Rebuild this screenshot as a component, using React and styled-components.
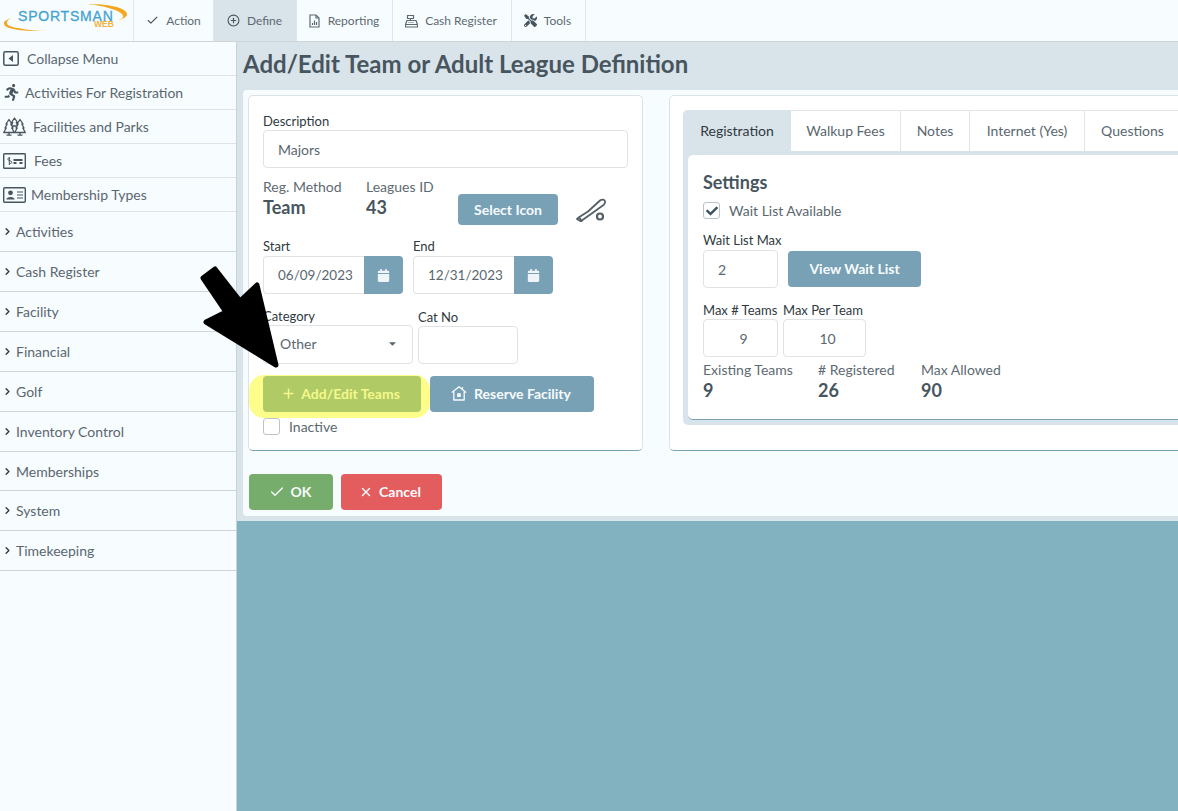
import React from "react";
import styled, { createGlobalStyle } from "styled-components";
import { Check, CirclePlus, ChevronRight, Plus, X } from "lucide-react";
import { FaRunning, FaCalendar, FaCheck, FaCaretDown, FaTools } from "react-icons/fa";

const Global = createGlobalStyle`
  html, body { margin: 0; padding: 0; height: 100%; overflow: hidden; }
  body { font-family: Lato, "Open Sans", sans-serif; color: #4b5962; background: #f7fcff; }
  * { box-sizing: border-box; }
`;

const Page = styled.div`
  position: relative;
  width: 1178px;
  height: 811px;
  overflow: hidden;
  display: flex;
  flex-direction: column;
`;

const TopBar = styled.header`
  height: 42px;
  flex: none;
  display: flex;
  background: #f7fcff;
  border-bottom: 1px solid #cfd6da;
`;

const LogoBox = styled.div`
  position: relative;
  width: 134px;
  flex: none;
  border-right: 1px solid #e0e6e9;
`;

const LogoName = styled.span`
  position: absolute;
  left: 18px;
  top: 11px;
  font: 400 14px/11px "Liberation Sans", sans-serif;
  letter-spacing: 0.8px;
  -webkit-text-stroke: 0.3px #45a3cf;
  color: #45a3cf;
`;

const LogoSub = styled.span`
  position: absolute;
  left: 94px;
  top: 21px;
  font: 700 8.5px/6px "Liberation Sans", sans-serif;
  color: #f2b23a;
`;

const LogoSwoosh = styled.svg`
  position: absolute;
  left: 0;
  top: 0;
`;

const NavTab = styled.div`
  width: ${(p) => p.$w}px;
  display: flex;
  align-items: center;
  justify-content: center;
  gap: 7px;
  padding-right: ${(p) => p.$shift || 0}px;
  font-size: 12px;
  color: #5d6a72;
  background: ${(p) => (p.$active ? "#d9e3ea" : "transparent")};
  border-right: 1px solid #e0e6e9;
`;

const Body = styled.div`
  flex: 1;
  display: flex;
  min-height: 0;
`;

const Sidebar = styled.nav`
  width: 237px;
  flex: none;
  background: #f7fcff;
  border-right: 1px solid #c9d2d7;
`;

const MenuLink = styled.div`
  height: 34px;
  display: flex;
  align-items: center;
  padding-left: 3px;
  font-size: 14px;
  color: #5a676f;
  border-bottom: 1px solid #dde3e6;
  svg { flex: none; }
  span { margin-left: ${(p) => p.$gap}px; }
`;

const MenuGroup = styled.div`
  height: ${(p) => p.$h || 40}px;
  display: flex;
  align-items: center;
  padding-left: 2px;
  font-size: 14px;
  color: #5a676f;
  border-bottom: 1px solid #cfd6da;
  span { margin-left: 3px; }
`;

const Main = styled.main`
  flex: 1;
  min-width: 0;
  background: #82b1bf;
`;

const Content = styled.div`
  background: #d9e3ea;
  padding: 0 0 5px 6px;
`;

const Heading = styled.div`
  height: 48px;
  padding-bottom: 5px;
  display: flex;
  align-items: center;
  font-size: 24px;
  font-weight: 700;
  color: #47555e;
`;

const Panel = styled.div`
  width: 1000px;
  height: 426px;
  padding: 5px 0 0 5px;
  background: #f7fcff;
  border-radius: 4px 0 0 4px;
`;

const Cards = styled.div`
  display: flex;
  gap: 26px;
  align-items: flex-start;
`;

const Card = styled.section`
  width: ${(p) => p.$w}px;
  height: 356px;
  flex: none;
  background: #fff;
  border: 1px solid #dde2e5;
  border-bottom: 1px solid #78a1b6;
  border-radius: 5px;
  padding: ${(p) => p.$pad};
`;

const Label = styled.label`
  display: block;
  height: 18px;
  font-size: 13px;
  line-height: 18px;
  color: #2f3a41;
  white-space: nowrap;
`;

const TextBox = styled.div`
  width: ${(p) => p.$w}px;
  height: ${(p) => p.$h || 38}px;
  display: flex;
  align-items: center;
  justify-content: ${(p) => (p.$center ? "center" : "flex-start")};
  padding-left: ${(p) => (p.$center ? 6 : 14)}px;
  background: #fff;
  border: 1px solid #dfe3e6;
  border-radius: 4px;
  font-size: 14px;
  color: #5a676f;
`;

const Row = styled.div`
  display: flex;
  align-items: ${(p) => p.$align || "flex-start"};
  gap: ${(p) => p.$gap || 0}px;
  margin-top: ${(p) => p.$mt || 0}px;
`;

const InfoRow = styled(Row)`
  height: 50px;
`;

const Field = styled.div`
  margin-top: ${(p) => p.$mt || 0}px;
`;

const Stat = styled.div`
  width: ${(p) => p.$w}px;
  flex: none;
`;

const StatLabel = styled.div`
  font-size: 14px;
  line-height: 18px;
  color: #5d6a72;
  white-space: nowrap;
`;

const StatValue = styled.div`
  font-size: 18px;
  line-height: 22px;
  font-weight: 700;
  color: #47555e;
`;

const Button = styled.div`
  width: ${(p) => p.$w}px;
  height: ${(p) => p.$h || 36}px;
  flex: none;
  display: flex;
  align-items: center;
  justify-content: center;
  gap: ${(p) => p.$gap ?? 6}px;
  padding: 0 ${(p) => p.$shift || 0}px 1px 0;
  background: ${(p) => p.$bg || "#78a1b6"};
  color: #f7fbfd;
  border-radius: 4px;
  font-size: 14px;
  font-weight: 700;
`;

const HighlightButton = styled(Button)`
  position: relative;
  color: #f5f98c;
  background: #b0ca66;
  &::before {
    content: "";
    position: absolute;
    inset: -1px -9px -6px -14px;
    background: #fdfd8c;
    border-radius: 15px;
    z-index: -1;
  }
`;

const Isolated = styled(Row)`
  isolation: isolate;
`;

const DateGroup = styled.div`
  display: flex;
  margin-top: 1px;
`;

const DateInput = styled(TextBox)`
  border-right: 0;
  border-radius: 4px 0 0 4px;
  font-size: 13.5px;
  padding-bottom: 1px;
`;

const DateButton = styled.div`
  width: 39px;
  height: 38px;
  display: flex;
  align-items: center;
  justify-content: center;
  background: #78a1b6;
  color: #eef4f7;
  border-radius: 0 4px 4px 0;
  font-size: 13px;
`;

const SelectBox = styled(TextBox)`
  justify-content: space-between;
  padding: 0 14px 2px 16px;
  color: #5a676f;
`;

const CheckBox = styled.div`
  width: 17px;
  height: 17px;
  flex: none;
  display: flex;
  align-items: center;
  justify-content: center;
  border: 1px solid #bcc4c9;
  border-radius: 3px;
  background: #fff;
  color: #3b5566;
  font-size: 12px;
`;

const CheckText = styled.span`
  font-size: 14px;
  color: #5a676f;
  margin-left: 9px;
`;

const TabBox = styled.div`
  width: 600px;
  height: 315px;
  background: #d9e3ea;
  border-radius: 5px;
`;

const TabStrip = styled.div`
  height: 41px;
  display: flex;
`;

const Tab = styled.div`
  width: ${(p) => p.$w}px;
  flex: none;
  display: flex;
  align-items: center;
  justify-content: center;
  padding-bottom: ${(p) => (p.$active ? 0 : 1)}px;
  font-size: 14px;
  color: ${(p) => (p.$active ? "#2f3a41" : "#5a676f")};
  background: ${(p) => (p.$active ? "#d9e3ea" : "#fff")};
  border-top: ${(p) => (p.$active ? "0" : "1px solid #e0e5e8")};
  border-right: ${(p) => (p.$active ? "0" : "1px solid #e0e5e8")};
  border-radius: ${(p) => (p.$active ? "5px 0 0 0" : "0")};
`;

const TabContent = styled.div`
  margin: 4px 0 0 5px;
  height: 265px;
  padding: 15px 15px 0;
  background: #fff;
  border-radius: 5px 0 0 5px;
  border-bottom: 1px solid #78a1b6;
`;

const SectionTitle = styled.h3`
  margin: 0;
  font-size: 18px;
  line-height: 24px;
  font-weight: 700;
  color: #47555e;
`;

const FormActions = styled.div`
  display: flex;
  gap: 8px;
  margin: 23px 0 0 1px;
`;

const Arrow = styled.svg`
  position: absolute;
  left: 190px;
  top: 260px;
  pointer-events: none;
`;

const menuLinks = [
  {
    label: "Collapse Menu",
    gap: 7,
    icon: (
      <svg width="17" height="17" viewBox="0 0 17 17">
        <rect x="0.8" y="1.8" width="14.4" height="13.4" rx="1.5" fill="none" stroke="#47555e" strokeWidth="1.5" />
        <path d="M10 5v7L5.500 8.500z" fill="#47555e" />
      </svg>
    ),
  },
  { label: "Activities For Registration", gap: 5, icon: <FaRunning size={17} color="#47555e" /> },
  {
    label: "Facilities and Parks",
    gap: 7,
    icon: (
      <svg width="23" height="19" viewBox="0 0 23 19" fill="none" stroke="#47555e" strokeWidth="1.300" strokeLinejoin="round">
        <path d="M11.500 1 8.500 5.500h1.200L8 9h7l-1.700-3.500h1.200z" />
        <path d="M6 2.500 3 7h1.200L2 11h1.200L.7 15.500h10.600L8.800 11H10L7.800 7H9z" fill="#f7fcff" />
        <path d="M17 2.500 14 7h1.200L13 11h1.200l-2.500 4.500h10.600L19.800 11H21l-2.200-4H20z" fill="#f7fcff" />
        <path d="M6 15.500v2.500M17 15.500v2.500M3.500 18.200h5M14.500 18.200h5" />
      </svg>
    ),
  },
  {
    label: "Fees",
    gap: 8,
    icon: (
      <svg width="23" height="16" viewBox="0 0 23 16" fill="none">
        <rect x="0.7" y="0.7" width="21.6" height="14.6" rx="0.8" stroke="#47555e" strokeWidth="1.4" />
        <path d="M7 5.200c-2.500-.8-3.200 2 0 2.600 2.800.6 2 3.200-.4 2.600M6.300 4v8" stroke="#47555e" strokeWidth="1" />
        <path d="M10.500 6h9v2h-9zM10.500 9h3v2h-3zM16.500 9h3v2h-3z" fill="#47555e" />
      </svg>
    ),
  },
  {
    label: "Membership Types",
    gap: 5,
    icon: (
      <svg width="23" height="16" viewBox="0 0 23 16" fill="none">
        <rect x="0.7" y="0.7" width="21.6" height="14.6" rx="1" stroke="#47555e" strokeWidth="1.4" />
        <circle cx="7.500" cy="5.800" r="2.400" fill="#47555e" />
        <path d="M3.300 12.500c0-3.400 8.400-3.400 8.400 0z" fill="#47555e" />
        <path d="M14 5h6M14 8h6M14 11h6" stroke="#47555e" strokeWidth="1.100" />
      </svg>
    ),
  },
];

const menuGroups = [
  { label: "Activities" },
  { label: "Cash Register" },
  { label: "Facility" },
  { label: "Financial" },
  { label: "Golf" },
  { label: "Inventory Control" },
  { label: "Memberships", h: 39 },
  { label: "System" },
  { label: "Timekeeping" },
];

const navIconProps = { width: 13, height: 14, fill: "none", stroke: "#5d6a72", strokeWidth: 1.2 };

const ReportIcon = () => (
  <svg {...navIconProps} viewBox="0 0 13 14">
    <path d="M2 1h6l3 3v9H2z" />
    <path d="M8 1v3h3M4.500 11V9M6.500 11V6.500M8.500 11V8" />
  </svg>
);

const RegisterIcon = () => (
  <svg {...navIconProps} viewBox="0 0 13 14">
    <path d="M2.500 1.500h6v3h-6zM5.500 4.500v2M2 6.500h9l1.500 4H.5zM.5 10.500h12V13H.5z" />
    <path d="M3.500 8.500h6" strokeDasharray="1 1" />
  </svg>
);

const BatIcon = () => (
  <svg width="30" height="24" viewBox="0 0 30 24" fill="none" stroke="#555f66" strokeWidth="1.800" strokeLinejoin="round">
    <path d="M1 21 3 19.300 12 13.500 24 2.500C26 1 28.500 1.300 29 3.300 29.400 5 28.500 6 27.500 7L15 16 6.500 22 5 23.500z" />
    <path d="M3 19.300 5.500 22.500" />
    <circle cx="24" cy="18.500" r="3" strokeWidth="2.200" />
  </svg>
);

const HomeIcon = () => (
  <svg width="16" height="15" viewBox="0 0 16 15" fill="none" stroke="#f7fbfd" strokeWidth="1.300" strokeLinejoin="round">
    <path d="M.8 6.500 8 .8l7.200 5.700M2.800 5.500V14h10.400V5.500M11.500 1v2.500" />
    <path d="M6.800 8h2.400v2.400H6.800z" fill="#f7fbfd" />
  </svg>
);

const navItems = [
  { label: "Action", w: 80, icon: <Check size={13} color="#47555e" /> },
  { label: "Define", w: 83, active: true, shift: 1, icon: <CirclePlus size={13} color="#47555e" /> },
  { label: "Reporting", w: 96, shift: 2, icon: <ReportIcon /> },
  { label: "Cash Register", w: 119, shift: 2, icon: <RegisterIcon /> },
  { label: "Tools", w: 74, shift: 2, icon: <FaTools size={13} color="#47555e" /> },
];

const tabs = [
  { label: "Registration", w: 108, active: true },
  { label: "Walkup Fees", w: 110 },
  { label: "Notes", w: 69 },
  { label: "Internet (Yes)", w: 115 },
  { label: "Questions", w: 96 },
];

export default function App() {
  return (
    <Page>
      <Global />
      <TopBar>
        <LogoBox>
          <LogoName>SPORTSMAN</LogoName>
          <LogoSub>WEB</LogoSub>
          <LogoSwoosh width="134" height="41" viewBox="0 0 134 41">
            <path d="M12 17C4 22 5 26 18 28 26 30 36 31 45 31 28 31.500-2 30 5 21z" fill="#f2a71e" />
            <path d="M88 4c18 0 40 3 39 11-.4 2-5 4.500-9 5.500 3-1 6-3 5-5-2-5-18-9.500-35-11.500z" fill="#f2a71e" />
          </LogoSwoosh>
        </LogoBox>
        {navItems.map((item) => (
          <NavTab key={item.label} $w={item.w} $active={item.active} $shift={item.shift}>
            {item.icon}
            {item.label}
          </NavTab>
        ))}
      </TopBar>
      <Body>
        <Sidebar>
          {menuLinks.map((link) => (
            <MenuLink key={link.label} $gap={link.gap}>
              {link.icon}
              <span>{link.label}</span>
            </MenuLink>
          ))}
          {menuGroups.map((group) => (
            <MenuGroup key={group.label} $h={group.h}>
              <ChevronRight size={11} color="#2f3a41" strokeWidth={3} />
              <span>{group.label}</span>
            </MenuGroup>
          ))}
        </Sidebar>
        <Main>
          <Content>
            <Heading>Add/Edit Team or Adult League Definition</Heading>
            <Panel>
              <Cards>
                <Card $w={395} $pad="16px 14px 0">
                  <Label>Description</Label>
                  <TextBox $w={365}>Majors</TextBox>
                  <InfoRow $mt={10}>
                    <Stat $w={103}>
                      <StatLabel>Reg. Method</StatLabel>
                      <StatValue>Team</StatValue>
                    </Stat>
                    <Stat $w={92}>
                      <StatLabel>Leagues ID</StatLabel>
                      <StatValue>43</StatValue>
                    </Stat>
                    <Row $mt={16} $gap={18} $align="center">
                      <Button $w={100} $h={31}>Select Icon</Button>
                      <BatIcon />
                    </Row>
                  </InfoRow>
                  <Row $mt={9} $gap={10}>
                    <div>
                      <Label>Start</Label>
                      <DateGroup>
                        <DateInput $w={101}>06/09/2023</DateInput>
                        <DateButton><FaCalendar /></DateButton>
                      </DateGroup>
                    </div>
                    <div>
                      <Label>End</Label>
                      <DateGroup>
                        <DateInput $w={101}>12/31/2023</DateInput>
                        <DateButton><FaCalendar /></DateButton>
                      </DateGroup>
                    </div>
                  </Row>
                  <Row $mt={13} $gap={5}>
                    <div>
                      <Label>Category</Label>
                      <SelectBox $w={150} $h={39}>
                        Other
                        <FaCaretDown size={11} color="#5a676f" />
                      </SelectBox>
                    </div>
                    <Field $mt={1}>
                      <Label>Cat No</Label>
                      <TextBox $w={100} />
                    </Field>
                  </Row>
                  <Isolated $mt={12} $gap={9}>
                    <HighlightButton $w={158} $gap={5} $shift={3}>
                      <Plus size={15} strokeWidth={2.4} />
                      Add/Edit Teams
                    </HighlightButton>
                    <Button $w={164} $gap={7} $shift={2}>
                      <HomeIcon />
                      Reserve Facility
                    </Button>
                  </Isolated>
                  <Row $mt={6} $align="center">
                    <CheckBox />
                    <CheckText>Inactive</CheckText>
                  </Row>
                </Card>
                <Card $w={520} $pad="14px 0 0 13px">
                  <TabBox>
                    <TabStrip>
                      {tabs.map((tab) => (
                        <Tab key={tab.label} $w={tab.w} $active={tab.active}>
                          {tab.label}
                        </Tab>
                      ))}
                    </TabStrip>
                    <TabContent>
                      <SectionTitle>Settings</SectionTitle>
                      <Row $mt={8} $align="center">
                        <CheckBox><FaCheck /></CheckBox>
                        <CheckText>Wait List Available</CheckText>
                      </Row>
                      <Field $mt={12}>
                        <Label>Wait List Max</Label>
                        <Row $mt={1} $gap={10} $align="center">
                          <TextBox $w={75}>2</TextBox>
                          <Button $w={133}>View Wait List</Button>
                        </Row>
                      </Field>
                      <Row $mt={13} $gap={5}>
                        <div>
                          <Label>Max # Teams</Label>
                          <TextBox $w={75} $center>9</TextBox>
                        </div>
                        <div>
                          <Label>Max Per Team</Label>
                          <TextBox $w={83} $center>10</TextBox>
                        </div>
                      </Row>
                      <Row $mt={4}>
                        <Stat $w={115}>
                          <StatLabel>Existing Teams</StatLabel>
                          <StatValue>9</StatValue>
                        </Stat>
                        <Stat $w={103}>
                          <StatLabel># Registered</StatLabel>
                          <StatValue>26</StatValue>
                        </Stat>
                        <Stat $w={100}>
                          <StatLabel>Max Allowed</StatLabel>
                          <StatValue>90</StatValue>
                        </Stat>
                      </Row>
                    </TabContent>
                  </TabBox>
                </Card>
              </Cards>
              <FormActions>
                <Button $w={84} $bg="#76ac6c" $shift={2}>
                  <Check size={16} strokeWidth={2.2} />
                  OK
                </Button>
                <Button $w={101} $bg="#e45d5e" $shift={3}>
                  <X size={14} strokeWidth={2.4} />
                  Cancel
                </Button>
              </FormActions>
            </Panel>
          </Content>
        </Main>
      </Body>
      <Arrow width="100" height="120" viewBox="0 0 100 120">
        <polygon
          points="13,18 25,9 50,41 67,25 86,105 16,62 36,52"
          fill="#000"
          stroke="#000"
          strokeWidth="5"
          strokeLinejoin="round"
        />
      </Arrow>
    </Page>
  );
}
